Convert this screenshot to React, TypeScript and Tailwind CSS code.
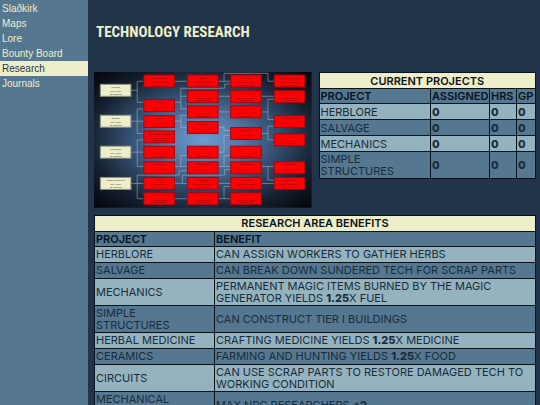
import React from "react";

const navItems = ["Slaðkirk", "Maps", "Lore", "Bounty Board", "Research", "Journals"];

const projects = ["Herblore", "Salvage", "Mechanics", "Simple Structures"];

const benefits: [string, React.ReactNode][] = [
  ["Herblore", "Can assign workers to gather herbs"],
  ["Salvage", "Can break down sundered tech for scrap parts"],
  ["Mechanics", <>Permanent magic items burned by the magic generator yields <b className="font-extrabold">1.25</b>x fuel</>],
  ["Simple Structures", "Can construct tier I buildings"],
  ["Herbal Medicine", <>Crafting medicine yields <b className="font-extrabold">1.25</b>x medicine</>],
  ["Ceramics", <>Farming and hunting yields <b className="font-extrabold">1.25</b>x food</>],
  ["Circuits", "Can use scrap parts to restore damaged tech to working condition"],
  ["Mechanical Advantage", <>Max NPC researchers <b className="font-extrabold">+2</b></>],
];

type TechNode = { x: number; y: number; label: string; root?: boolean };

function column(x: number, entries: [number, string][], root = false): TechNode[] {
  return entries.map(([y, label]) => ({ x, y, label, root }));
}

const nodes: TechNode[] = [
  ...column(30, [[48, "Herblore"], [141, "Salvage"], [234, "Mechanics"], [328, "Simple Structures"]], true),
  ...column(161, [[20, "Herbal Medicine"], [94, "Ceramics"], [142, "Circuits"], [188, "Mechanical Advantage"], [234, "Mechanical Systems"], [281, "Metallurgy"], [328, "Tools"], [374, "Simple Machines"]]),
  ...column(292, [[20, "Botany"], [67, "Glass Blowing"], [113, "Advanced Ceramics"], [160, "Power Tools"], [234, "Steam Power"], [281, "Blacksmithing"], [328, "Construction"], [374, "Engineering"]]),
  ...column(422, [[20, "Medicine"], [67, "Thermodynamics"], [113, "Energy Storage"], [178, "Robotics"], [234, "Precision Industrial"], [281, "Applied Design"], [328, "Architecture"], [374, "Transportation"]]),
  ...column(553, [[20, "Advanced Medicine"], [67, "Medical Physics"], [142, "Quantum Physics"], [197, "Automata"], [281, "Aeronautics"], [328, "Manufacturing"]]),
];

const links = [
  "M123 67H142M161 40H142V103H161",
  "M123 160H161M161 123H142V197H161",
  "M123 253H161M161 216H142V296H161",
  "M123 347H161M161 393H142V322H268V309H292",
  "M255 40H292M255 103H273M292 123H273V61H405V48H422M273 85H292",
  "M255 160H273M292 142H273V178H292",
  "M255 296H292M273 296V263H292",
  "M255 347H292M278 347V322H405V305H422M255 393H292",
  "M386 40H422M403 40V16H535V40H553",
  "M386 85H422M386 132H422M386 178H403V188H422",
  "M386 253H403V202H422M386 296H422M403 296V263H422",
  "M386 347H422M386 393H422M403 393V356H422",
  "M516 85H553M516 132H535M553 94H535V155H553",
  "M516 197H535M553 175H535V216H553",
  "M516 296H553M535 296V337H553M516 347H553",
];

function TechTree() {
  return (
    <svg viewBox="12 12 654 408" className="block w-full" role="img" aria-label="Technology tree">
      <defs>
        <radialGradient id="glow" cx="0.5" cy="0.5" r="0.7">
          <stop offset="0" stopColor="#6c9cd2" />
          <stop offset="0.25" stopColor="#5379a6" />
          <stop offset="0.5" stopColor="#324d6e" />
          <stop offset="0.75" stopColor="#15202f" />
          <stop offset="1" stopColor="#04060a" />
        </radialGradient>
      </defs>
      <rect x="12" y="12" width="654" height="408" fill="url(#glow)" />
      <path d={links.join("")} fill="none" stroke="#b5c3d2" strokeOpacity="0.6" strokeWidth="2.5" />
      {nodes.map((n) => (
        <g key={`${n.x}-${n.y}`}>
          <rect
            x={n.x + 1}
            y={n.y + 1}
            width="92"
            height="36"
            fill={n.root ? "#eeefca" : "#fb0205"}
            stroke={n.root ? "#8b917f" : "#a5060f"}
            strokeWidth="3"
          />
          <g
            fill={n.root ? "#30332c" : "#5c0008"}
            fontSize="7"
            textAnchor="middle"
            fontFamily="'Liberation Sans', sans-serif"
          >
            <text x={n.x + 47} y={n.y + 12}>{n.label}</text>
            <text x={n.x + 47} y={n.y + 25}>{n.root ? "100 Hours" : "250 Hours | 50gp"}</text>
            <text x={n.x + 47} y={n.y + 33}>{n.root ? "No Training" : "Req Training"}</text>
          </g>
        </g>
      ))}
    </svg>
  );
}

const tableClass =
  "w-full table-fixed border-collapse border border-[#08121c] font-['Inter',sans-serif] text-[11px] leading-[12px] uppercase text-[#182c3b]";
const cellClass = "h-[16px] border border-[#08121c] py-px pl-px pr-2 text-left";
const valueClass = "h-[16px] border border-[#08121c] py-px pl-px text-left font-extrabold";
const headClass = "h-[15px] border border-[#08121c] py-px pl-px text-left font-semibold text-[#06121d]";
const captionClass = "h-[16px] border border-[#08121c] bg-[#eeefca] py-px text-center font-semibold text-[#0c1318]";

function CurrentProjects() {
  return (
    <table className={tableClass}>
      <colgroup>
        <col />
        <col className="w-[59px]" />
        <col className="w-[27px]" />
        <col className="w-[19px]" />
      </colgroup>
      <thead>
        <tr>
          <th colSpan={4} className={captionClass}>Current Projects</th>
        </tr>
        <tr className="bg-[#557790]">
          {["Project", "Assigned", "Hrs", "GP"].map((h) => (
            <th key={h} scope="col" className={headClass}>{h}</th>
          ))}
        </tr>
      </thead>
      <tbody>
        {projects.map((name, i) => (
          <tr key={name} className={i % 2 ? "bg-[#557790]" : "bg-[#94b3bf]"}>
            <td className={cellClass}>{name}</td>
            {[0, 0, 0].map((value, k) => (
              <td key={k} className={valueClass}>{value}</td>
            ))}
          </tr>
        ))}
      </tbody>
    </table>
  );
}

function Benefits() {
  return (
    <table className={tableClass}>
      <colgroup>
        <col className="w-[120px]" />
        <col />
      </colgroup>
      <thead>
        <tr>
          <th colSpan={2} className={captionClass}>Research Area Benefits</th>
        </tr>
        <tr className="bg-[#557790]">
          <th scope="col" className={headClass}>Project</th>
          <th scope="col" className={headClass}>Benefit</th>
        </tr>
      </thead>
      <tbody>
        {benefits.map(([name, text], i) => (
          <tr key={name} className={i % 2 ? "bg-[#557790]" : "bg-[#94b3bf]"}>
            <td className={cellClass}>{name}</td>
            <td className={cellClass}>{text}</td>
          </tr>
        ))}
      </tbody>
    </table>
  );
}

export default function App() {
  return (
    <div className="flex h-screen overflow-hidden bg-[#22344a]">
      <nav className="w-[88px] shrink-0 bg-[#557790] pt-px font-['Liberation_Sans',Arial,sans-serif] text-[10px] leading-[15px]">
        {navItems.map((item) => (
          <a
            key={item}
            href="#"
            aria-current={item === "Research" ? "page" : undefined}
            className={`block pl-[2px] ${item === "Research" ? "bg-[#eeefca] text-[#22344a]" : "text-[#eeefca]"}`}
          >
            {item}
          </a>
        ))}
      </nav>
      <main className="min-w-0 flex-1 pr-1 pl-[6px]">
        <h1 className="flex h-[72px] items-center pb-2 pl-[2px] font-['Liberation_Sans_Narrow','Roboto_Condensed','Liberation_Sans',sans-serif] text-[15px] font-bold whitespace-nowrap uppercase text-[#eeefca]">
          Technology Research
        </h1>
        <div className="grid grid-cols-2 items-start gap-[7px]">
          <TechTree />
          <CurrentProjects />
          <div className="col-span-2">
            <Benefits />
          </div>
        </div>
      </main>
    </div>
  );
}
